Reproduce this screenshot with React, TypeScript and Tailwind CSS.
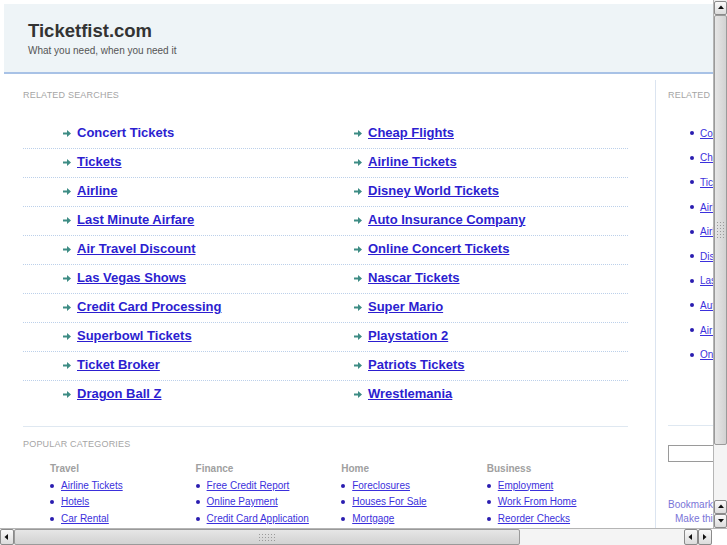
import React from "react";

const leftCol = [
  "Concert Tickets",
  "Tickets",
  "Airline",
  "Last Minute Airfare",
  "Air Travel Discount",
  "Las Vegas Shows",
  "Credit Card Processing",
  "Superbowl Tickets",
  "Ticket Broker",
  "Dragon Ball Z",
];

const rightCol = [
  "Cheap Flights",
  "Airline Tickets",
  "Disney World Tickets",
  "Auto Insurance Company",
  "Online Concert Tickets",
  "Nascar Tickets",
  "Super Mario",
  "Playstation 2",
  "Patriots Tickets",
  "Wrestlemania",
];

const sideLinks = [
  "Concert Tickets",
  "Cheap Flights",
  "Tickets",
  "Airline",
  "Airline Tickets",
  "Disney World Tickets",
  "Last Minute Airfare",
  "Auto Insurance Company",
  "Air Travel Discount",
  "Online Concert Tickets",
];

const categories = [
  { title: "Travel", links: ["Airline Tickets", "Hotels", "Car Rental"] },
  { title: "Finance", links: ["Free Credit Report", "Online Payment", "Credit Card Application"] },
  { title: "Home", links: ["Foreclosures", "Houses For Sale", "Mortgage"] },
  { title: "Business", links: ["Employment", "Work From Home", "Reorder Checks"] },
];

function Arrow() {
  return (
    <svg width="8" height="7" viewBox="0 0 8 7" className="shrink-0">
      <path d="M0 2.5h4V0l4 3.5L4 7V4.5H0z" fill="#3d8c84" />
    </svg>
  );
}

function Dot() {
  return <span className="inline-block w-[4px] h-[4px] rounded-full bg-[#2a1db0] shrink-0" />;
}

function Tri({ dir }: { dir: "up" | "down" | "left" | "right" }) {
  const d = {
    up: "M1 5L4 1.5L7 5z",
    down: "M1 2L4 5.5L7 2z",
    left: "M5 1L1.5 4L5 7z",
    right: "M2 1L5.5 4L2 7z",
  }[dir];
  return (
    <svg width="8" height="8" viewBox="0 0 8 8">
      <path d={d} fill="#111" />
    </svg>
  );
}

function ScrollBtn({ dir, cls }: { dir: "up" | "down" | "left" | "right"; cls: string }) {
  return (
    <div
      className={`flex items-center justify-center border border-[#8a8a8a] rounded-[2px] bg-gradient-to-b from-[#fafafa] to-[#dcdcdc] ${cls}`}
    >
      <Tri dir={dir} />
    </div>
  );
}

function Grip({ vertical }: { vertical?: boolean }) {
  return (
    <div className={`grid gap-[2px] ${vertical ? "grid-cols-3" : "grid-cols-6"}`}>
      {Array.from({ length: 18 }).map((_, i) => (
        <span key={i} className="w-[1px] h-[1px] bg-[#9a9a9a]" />
      ))}
    </div>
  );
}

export default function App() {
  return (
    <div className="w-[727px] h-[545px] overflow-hidden bg-white flex flex-col font-['Liberation_Sans',Arial,sans-serif]">
      <div className="flex h-[528px]">
        {/* page viewport */}
        <div className="w-[713px] h-[528px] overflow-hidden">
          <div className="w-[900px] pt-[4px] pl-[4px]">
            {/* Header */}
            <div className="h-[70px] bg-[#eef4f7] border-b-2 border-[#a8c2e6] pl-[24px] pt-[16px]">
              <div className="text-[18.5px] leading-[22px] font-bold text-[#333]">Ticketfist.com</div>
              <div className="text-[10px] leading-[13px] text-[#555] mt-[2px]">What you need, when you need it</div>
            </div>

            <div className="flex mt-[6px]">
              {/* Main */}
              <div className="w-[651px] pl-[19px] pt-[9px]">
                <div className="text-[9px] leading-[12px] tracking-[0.2px] text-[#a5a5a5] uppercase">Related Searches</div>
                <div className="w-[605px] mt-[19px]">
                  {leftCol.map((l, i) => (
                    <div
                      key={l}
                      className={`flex items-center h-[29px] pb-[2px] pl-[40px] border-b border-dotted ${i < 9 ? "border-[#bcd0ea]" : "border-transparent"}`}
                    >
                      <div className="w-[291px] flex items-center gap-[6px]">
                        <Arrow />
                        <a className={`text-[13px] font-bold text-[#2c1ed0] ${i === 0 ? "" : "underline"}`}>{l}</a>
                      </div>
                      <div className="flex items-center gap-[6px]">
                        <Arrow />
                        <a className="text-[13px] font-bold text-[#2c1ed0] underline">{rightCol[i]}</a>
                      </div>
                    </div>
                  ))}
                </div>
                <div className="w-[605px] border-t border-[#dfe8f1] mt-[16px]" />
                <div className="text-[9px] leading-[12px] tracking-[0.2px] text-[#a5a5a5] uppercase mt-[11px]">Popular Categories</div>
                <div className="flex pl-[27px] mt-[11px]">
                  {categories.map((c) => (
                    <div key={c.title} className="w-[145.6px] text-[10px] leading-[16.5px]">
                      <div className="font-bold text-[#a0a0a0]">{c.title}</div>
                      {c.links.map((l) => (
                        <div key={l} className="flex items-center gap-[7px]">
                          <Dot />
                          <a className="text-[#3b30dc] underline">{l}</a>
                        </div>
                      ))}
                    </div>
                  ))}
                </div>
              </div>

              {/* Sidebar */}
              <div className="w-[240px] border-l border-[#dbe4f0] pl-[12px] pt-[9px] min-h-[460px]">
                <div className="text-[9px] leading-[12px] tracking-[0.2px] text-[#a5a5a5] uppercase">Related Searches</div>
                <div className="mt-[20px] pl-[22px]">
                  {sideLinks.map((l) => (
                    <div key={l} className="h-[24.6px] flex items-center gap-[6px] text-[10px]">
                      <Dot />
                      <a className="text-[#3b30dc] underline whitespace-nowrap">{l}</a>
                    </div>
                  ))}
                </div>
                <div className="w-[160px] border-t border-[#dfe8f1] mt-[58px]" />
                <div className="mt-[19px] w-[150px] h-[17px] border border-[#9a9a9a] bg-white" />
                <div className="mt-[36px] text-[10px] leading-[14px] text-[#7a74d8]">Bookmark this page</div>
                <div className="pl-[7px] text-[10px] leading-[14px] text-[#7a74d8]">Make this your homepage</div>
              </div>
            </div>
          </div>
        </div>

        {/* vertical scrollbar */}
        <div className="w-[14px] h-[528px] flex flex-col bg-[#eeeeee] border-l border-[#b5b5b5]">
          <ScrollBtn dir="up" cls="h-[14px] mt-[1px]" />
          <div className="h-[430px] border border-[#9a9a9a] rounded-[2px] bg-gradient-to-r from-[#e6e6e6] to-[#d2d2d2] flex items-center justify-center">
            <Grip vertical />
          </div>
          <div className="flex-1 bg-[#f4f4f4]" />
          <ScrollBtn dir="up" cls="h-[14px]" />
          <ScrollBtn dir="down" cls="h-[14px]" />
        </div>
      </div>

      {/* horizontal scrollbar */}
      <div className="h-[17px] flex bg-[#eeeeee] border-t border-[#b5b5b5]">
        <ScrollBtn dir="left" cls="w-[14px]" />
        <div className="w-[506px] border border-[#9a9a9a] rounded-[2px] bg-gradient-to-b from-[#e6e6e6] to-[#d2d2d2] flex items-center justify-center">
          <Grip />
        </div>
        <div className="w-[164px] bg-[#f4f4f4]" />
        <ScrollBtn dir="left" cls="w-[14px]" />
        <ScrollBtn dir="right" cls="w-[14px]" />
        <div className="flex-1 bg-white" />
      </div>
    </div>
  );
}
